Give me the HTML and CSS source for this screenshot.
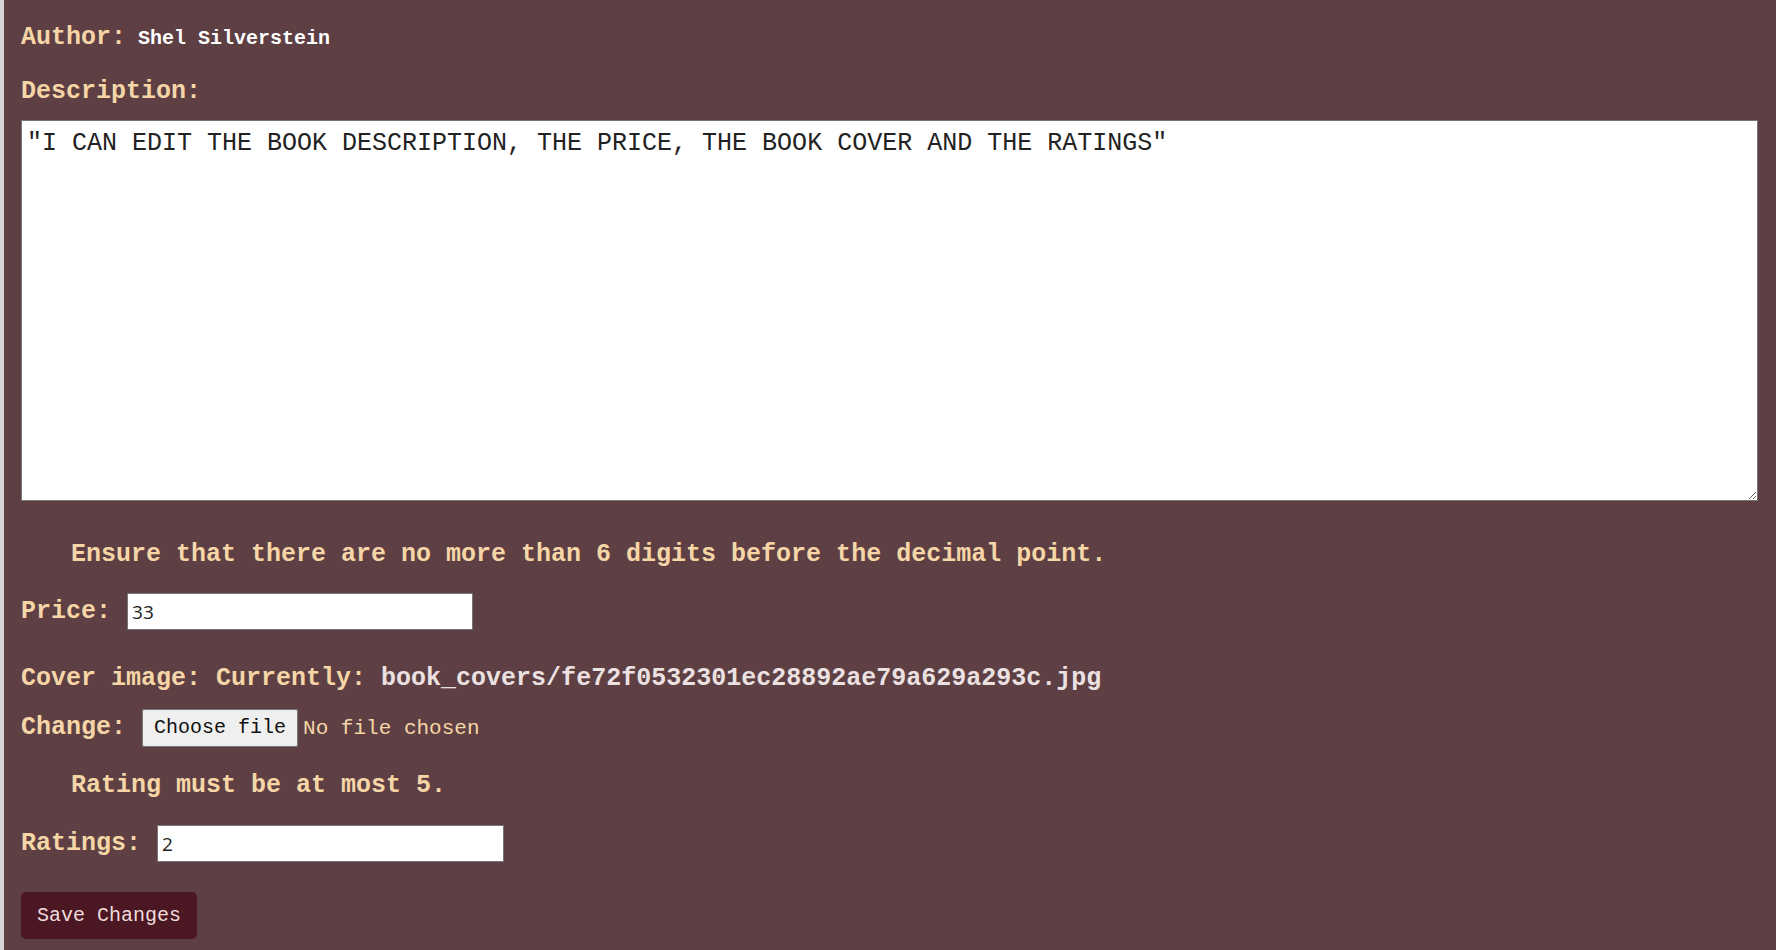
FILE: index.html
```html
<!DOCTYPE html>
<html lang="en">
<head>
<meta charset="utf-8">
<title>Edit Book</title>
<link rel="stylesheet" href="styles.css">
</head>
<body>
<main class="page">
  <form class="book-form">
    <p class="author"><span class="label">Author:</span> <span class="author-name">Shel Silverstein</span></p>
    <p class="label desc-label">Description:</p>
    <textarea class="desc">"I CAN EDIT THE BOOK DESCRIPTION, THE PRICE, THE BOOK COVER AND THE RATINGS"</textarea>
    <ul class="errorlist first-error"><li>Ensure that there are no more than 6 digits before the decimal point.</li></ul>
    <p class="row price-row"><span class="label">Price:</span><input class="text-input price-input" type="text" value="33"></p>
    <p class="cover-row"><span class="label">Cover image:</span> <span class="label">Currently:</span> <span class="cover-path">book_covers/fe72f0532301ec28892ae79a629a293c.jpg</span></p>
    <p class="row change-row"><span class="label">Change:</span><label class="file-btn">Choose file<input class="file-input" type="file"></label><span class="file-status">No file chosen</span></p>
    <ul class="errorlist second-error"><li>Rating must be at most 5.</li></ul>
    <p class="row ratings-row"><span class="label">Ratings:</span><input class="text-input ratings-input" type="text" value="2"></p>
    <button class="save-btn" type="button">Save Changes</button>
  </form>
</main>
</body>
</html>
```

FILE: styles.css
```css
html, body {
  margin: 0;
  padding: 0;
}

body {
  background: #5e4044;
  border-left: 4px solid #d6d4d4;
  min-height: 100vh;
  box-sizing: border-box;
  font-family: "Liberation Mono", "Courier New", monospace;
}

.page {
  padding: 0 18px 0 17px;
}

.book-form {
  display: flex;
  flex-direction: column;
  align-items: flex-start;
}

.book-form p {
  margin: 0;
}

.label {
  font-size: 25px;
  font-weight: bold;
  color: #f6d6a7;
  line-height: 30px;
}

.author {
  margin-top: 23px !important;
  line-height: 30px;
  font-size: 20px;
  white-space: pre;
}

.author-name {
  font-size: 20px;
  font-weight: bold;
  color: #ffffff;
}

.desc-label {
  margin-top: 23px !important;
}

.desc {
  margin-top: 13px;
  width: 100%;
  height: 381px;
  box-sizing: border-box;
  border: 1px solid #767676;
  padding: 8px 5px;
  font-family: "Liberation Mono", "Courier New", monospace;
  font-size: 25px;
  color: #222222;
  background: #ffffff;
  resize: vertical;
}

.errorlist {
  list-style: none;
  margin: 0;
  padding: 0 0 0 50px;
  font-size: 25px;
  font-weight: bold;
  color: #f6d6a7;
  line-height: 30px;
}

.first-error {
  margin-top: 39px;
}

.second-error {
  margin-top: 24px;
}

.row {
  display: flex;
  align-items: center;
  font-size: 25px;
}

.price-row {
  margin-top: 23px !important;
}

.ratings-row {
  margin-top: 24px !important;
}

.text-input {
  box-sizing: border-box;
  height: 37px;
  width: 346px;
  border: 1px solid #767676;
  padding: 0 4px;
  font-family: "Open Sans", "Noto Sans", sans-serif;
  font-size: 19px;
  color: #222222;
  background: #ffffff;
  margin: 0 0 0 16px;
}

.ratings-input {
  width: 347px;
}

.cover-row {
  margin-top: 34px !important;
  line-height: 30px;
  font-size: 25px;
  white-space: pre;
}

.cover-path {
  font-size: 25px;
  font-weight: bold;
  color: #ece1e1;
}

.change-row {
  margin-top: 15px !important;
}

.file-btn {
  margin-left: 16px;
  font-family: "Liberation Mono", "Courier New", monospace;
  font-size: 20px;
  line-height: 24px;
  color: #111111;
  background: #efefef;
  border: 1px solid #767676;
  border-radius: 2px;
  padding: 6px 11px;
}

.file-input {
  display: none;
}

.file-status {
  margin-left: 5px;
  font-family: "Liberation Mono", "Courier New", monospace;
  font-size: 21px;
  color: #f6d6a7;
}

.save-btn {
  margin-top: 30px;
  background: #4b1722;
  color: #f0dcdc;
  border: none;
  border-radius: 5px;
  font-family: "Liberation Mono", "Courier New", monospace;
  font-size: 20px;
  padding: 12px 16px;
  line-height: 23px;
}
```
